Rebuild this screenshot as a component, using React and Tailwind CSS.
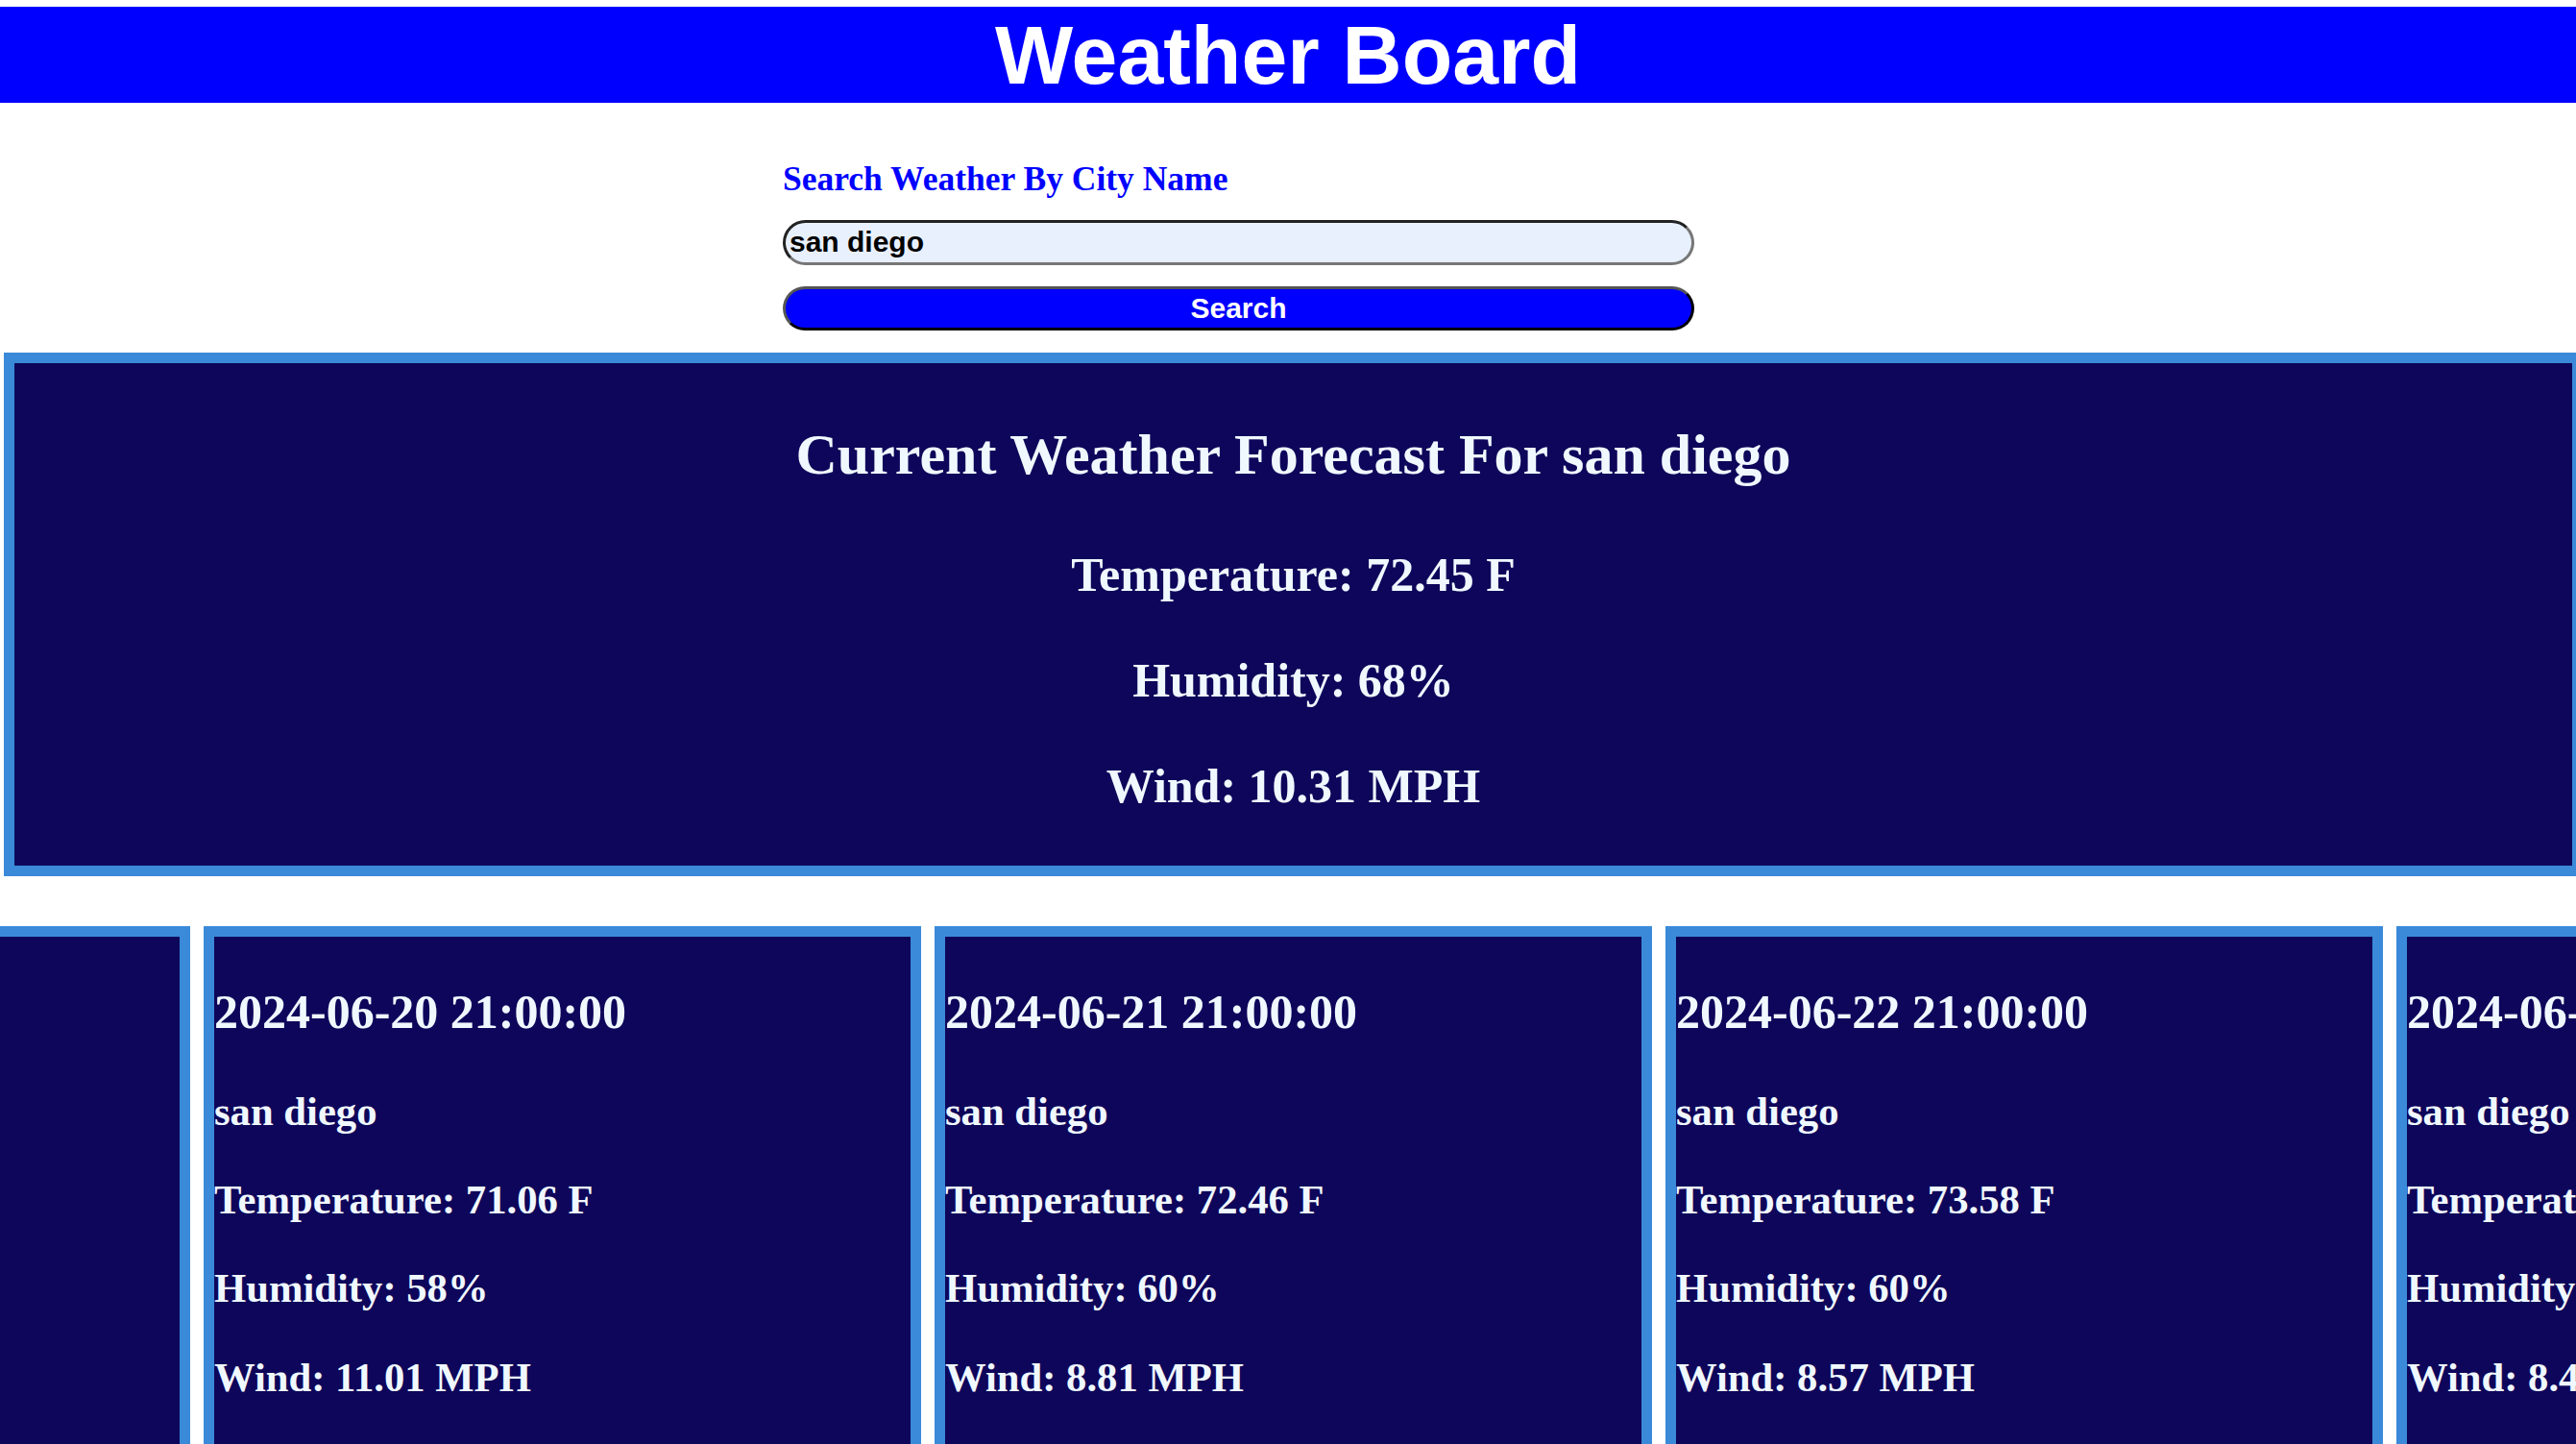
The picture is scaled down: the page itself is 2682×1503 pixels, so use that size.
import { useState } from "react";

const forecast = [
  { date: "2024-06-19 21:00:00", temp: "70.12", humidity: "61", wind: "10.02" },
  { date: "2024-06-20 21:00:00", temp: "71.06", humidity: "58", wind: "11.01" },
  { date: "2024-06-21 21:00:00", temp: "72.46", humidity: "60", wind: "8.81" },
  { date: "2024-06-22 21:00:00", temp: "73.58", humidity: "60", wind: "8.57" },
  { date: "2024-06-23 21:00:00", temp: "72.91", humidity: "62", wind: "8.43" },
];

function ForecastCard({ day, city }) {
  return (
    <div className="w-[747px] shrink-0 border-[11px] border-[#3a8ad9] bg-[#0e065a] pt-[50px] pb-[60px] text-[#f0f8ff] font-bold font-['Liberation_Serif','Times_New_Roman',serif]">
      <h3 className="text-[50px] leading-[1.15] whitespace-nowrap">{day.date}</h3>
      <div className="mt-[49px] flex flex-col gap-[43.2px] text-[42.67px] leading-[1.15] whitespace-nowrap">
        <p>{city}</p>
        <p>Temperature: {day.temp} F</p>
        <p>Humidity: {day.humidity}%</p>
        <p>Wind: {day.wind} MPH</p>
      </div>
    </div>
  );
}

export default function App() {
  const [city, setCity] = useState("san diego");

  return (
    <div className="h-screen overflow-hidden bg-white">
      <div className="pt-[7px]">
        <h1 className="h-[100px] bg-[#0000ff] text-center text-[86px] leading-[100px] font-bold text-white font-['Liberation_Sans',Arial,sans-serif]">
          Weather Board
        </h1>
      </div>

      <form
        className="ml-[815px] w-[949px] pt-[59px]"
        onSubmit={(e) => e.preventDefault()}
      >
        <h5 className="text-[35.5px] leading-[1.15] font-bold text-[#0000ff] font-['Liberation_Serif','Times_New_Roman',serif]">
          Search Weather By City Name
        </h5>
        <input
          type="text"
          value={city}
          onChange={(e) => setCity(e.target.value)}
          className="mt-[22px] block h-[47px] w-full rounded-full border-[3px] border-t-[#222] border-l-[#222] border-b-[#767676] border-r-[#767676] bg-[#e8f0fe] px-[4px] text-[30px] font-bold text-black outline-none font-['Liberation_Sans',Arial,sans-serif]"
        />
        <button
          type="submit"
          className="mt-[22px] block h-[46px] w-full rounded-full border-[3px] border-t-[#555] border-l-[#555] border-b-black border-r-black bg-[#0000ff] text-[30px] leading-none font-bold text-white font-['Liberation_Sans',Arial,sans-serif]"
        >
          Search
        </button>
      </form>

      <div className="mt-[23px] ml-[4px] w-[2685px] border-[11px] border-[#3a8ad9] bg-[#0e065a] pt-[61px] pb-[54px] text-center font-bold text-[#f0f8ff] font-['Liberation_Serif','Times_New_Roman',serif]">
        <h2 className="text-[60px] leading-[1.15]">
          Current Weather Forecast For {city}
        </h2>
        <div className="mt-[62px] flex flex-col gap-[52.5px] text-[50px] leading-[1.15]">
          <h3>Temperature: 72.45 F</h3>
          <h3>Humidity: 68%</h3>
          <h3>Wind: 10.31 MPH</h3>
        </div>
      </div>

      <div className="mt-[52px] -ml-[549px] flex gap-[14px]">
        {forecast.map((day) => (
          <ForecastCard key={day.date} day={day} city={city} />
        ))}
      </div>
    </div>
  );
}
